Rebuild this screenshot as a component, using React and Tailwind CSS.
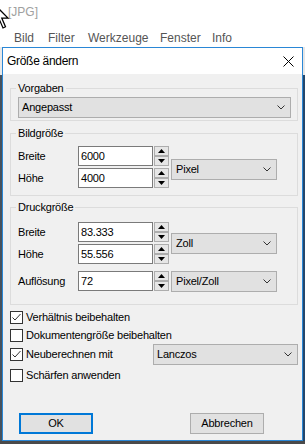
import React from "react";

function Chevron() {
  return (
    <svg width="8" height="5" viewBox="0 0 8 5" className="block">
      <polyline points="0.5,0.5 4,4 7.5,0.5" fill="none" stroke="#333" strokeWidth="1" />
    </svg>
  );
}

function Select({ label, className = "" }) {
  return (
    <div
      className={`flex h-[21px] items-center justify-between border border-[#adadad] bg-[#e1e1e1] pl-[3px] pr-[5px] ${className}`}
    >
      <span className="leading-[13px]">{label}</span>
      <Chevron />
    </div>
  );
}

function Spinner() {
  return (
    <div className="ml-[1px] flex h-[20px] w-[15px] flex-col">
      <div className="flex h-[10px] items-center justify-center border border-[#adadad] bg-[#e6e6e6]">
        <svg width="7" height="4" viewBox="0 0 7 4" className="block">
          <polygon points="3.5,0 7,4 0,4" fill="#000" />
        </svg>
      </div>
      <div className="flex h-[10px] items-center justify-center border border-[#adadad] bg-[#e6e6e6]">
        <svg width="7" height="4" viewBox="0 0 7 4" className="block">
          <polygon points="0,0 7,0 3.5,4" fill="#000" />
        </svg>
      </div>
    </div>
  );
}

function Field({ label, value }) {
  return (
    <div className="flex items-center">
      <span className="w-[60px] leading-[13px]">{label}</span>
      <div className="flex h-[20px] w-[75px] items-center border border-[#7a7a7a] bg-white pl-[2px] leading-[13px]">
        {value}
      </div>
      <Spinner />
    </div>
  );
}

function Group({ title, className = "", children }) {
  return (
    <fieldset className={`border border-[#dcdcdc] pl-[7px] ${className}`}>
      <legend className="ml-[-2px] px-[2px] leading-[13px]">{title}</legend>
      {children}
    </fieldset>
  );
}

function CheckBox({ checked, label, className = "" }) {
  return (
    <div className={`flex h-[13px] items-center gap-[3px] ${className}`}>
      <div className="h-[13px] w-[13px] shrink-0 border border-[#333] bg-white">
        {checked && (
          <svg width="11" height="11" viewBox="0 0 11 11" className="block">
            <polyline points="1.5,5.5 4,8 9.5,2" fill="none" stroke="#333" strokeWidth="1" />
          </svg>
        )}
      </div>
      <span className="leading-[13px]">{label}</span>
    </div>
  );
}

export default function App() {
  return (
    <div className="relative h-[444px] w-[305px] overflow-hidden bg-white font-['Liberation_Sans',Arial,sans-serif] text-black">
      {/* background app */}
      <div className="h-[47px]">
        <div className="h-[24px] pl-[8px] pt-[4px] text-[12px] leading-[16px] text-[#a0a0a0]">[JPG]</div>
        <div className="mt-[6px] flex h-[16px] pl-[14px] text-[12px] leading-[16px] text-[#555]">
          <span className="w-[34px]">Bild</span>
          <span className="w-[40px]">Filter</span>
          <span className="w-[72px]">Werkzeuge</span>
          <span className="w-[52px]">Fenster</span>
          <span>Info</span>
        </div>
      </div>

      <div className="flex h-[394px]">
        <div className="flex w-[2px] flex-col">
          <div className="h-[28px] bg-[#e8e8e8]" />
          <div className="flex-1 bg-[#46525e]" />
        </div>

        {/* dialog */}
        <div className="flex w-[301px] flex-col border border-[#2a87d6] bg-[#f0f0f0] text-[11px] tracking-[-0.2px]">
          <div className="flex h-[26px] items-center justify-between bg-white pl-[4px] pr-[8px]">
            <span className="text-[12px] leading-[16px] tracking-[-0.3px]">Größe ändern</span>
            <svg width="11" height="11" viewBox="0 0 11 11" className="block">
              <line x1="0.5" y1="0.5" x2="10.5" y2="10.5" stroke="#000" strokeWidth="1" />
              <line x1="10.5" y1="0.5" x2="0.5" y2="10.5" stroke="#000" strokeWidth="1" />
            </svg>
          </div>

          <div className="flex flex-1 flex-col pb-[6px] pl-[7px] pr-[4px] pt-[8px]">
            <Group title="Vorgaben" className="pb-[2px] pr-[6px]">
              <Select label="Angepasst" className="mt-[2px]" />
            </Group>

            <Group title="Bildgröße" className="mt-[6px] pb-[7px]">
              <div className="mt-[6px] flex">
                <div className="flex flex-col gap-[2px]">
                  <Field label="Breite" value="6000" />
                  <Field label="Höhe" value="4000" />
                </div>
                <Select label="Pixel" className="ml-[2px] mt-[13px] w-[106px] pl-[4px]" />
              </div>
            </Group>

            <Group title="Druckgröße" className="mt-[5px] pb-[12px]">
              <div className="mt-[8px] flex">
                <div className="flex flex-col gap-[2px]">
                  <Field label="Breite" value="83.333" />
                  <Field label="Höhe" value="55.556" />
                </div>
                <Select label="Zoll" className="ml-[2px] mt-[11px] w-[106px] pl-[4px]" />
              </div>
              <div className="mt-[7px] flex items-start">
                <Field label="Auflösung" value="72" />
                <Select label="Pixel/Zoll" className="ml-[2px] w-[106px] pl-[4px]" />
              </div>
            </Group>

            <div className="mt-[6px] flex flex-col">
              <CheckBox checked label="Verhältnis beibehalten" />
              <CheckBox className="mt-[5px]" label="Dokumentengröße beibehalten" />
              <div className="mt-[2px] flex h-[21px] items-center">
                <CheckBox checked label="Neuberechnen mit" />
                <Select label="Lanczos" className="ml-auto w-[145px]" />
              </div>
              <CheckBox className="mt-[4px]" label="Schärfen anwenden" />
            </div>

            <div className="mt-auto flex">
              <div className="ml-[9px] flex h-[21px] w-[74px] items-center justify-center border-2 border-[#0078d7] bg-[#e1e1e1] leading-[13px]">
                OK
              </div>
              <div className="ml-[97px] flex h-[21px] w-[74px] items-center justify-center border border-[#adadad] bg-[#e1e1e1] leading-[13px]">
                Abbrechen
              </div>
            </div>
          </div>
        </div>

        <div className="flex w-[2px] flex-col">
          <div className="h-[28px] bg-[#e6e6e6]" />
          <div className="flex-1 bg-[#24476b]" />
        </div>
      </div>

      <div className="h-[3px] bg-[#4a4a4a]" />

      {/* mouse cursor */}
      <svg
        width="20"
        height="30"
        viewBox="0 0 16 24"
        className="absolute left-[-7px] top-[3px]"
      >
        <path
          d="M1 1 V17 L5 13 L8 20 L10 19 L7 12 H12 Z"
          fill="#fff"
          stroke="#000"
          strokeWidth="1"
          strokeLinejoin="miter"
        />
      </svg>
    </div>
  );
}
